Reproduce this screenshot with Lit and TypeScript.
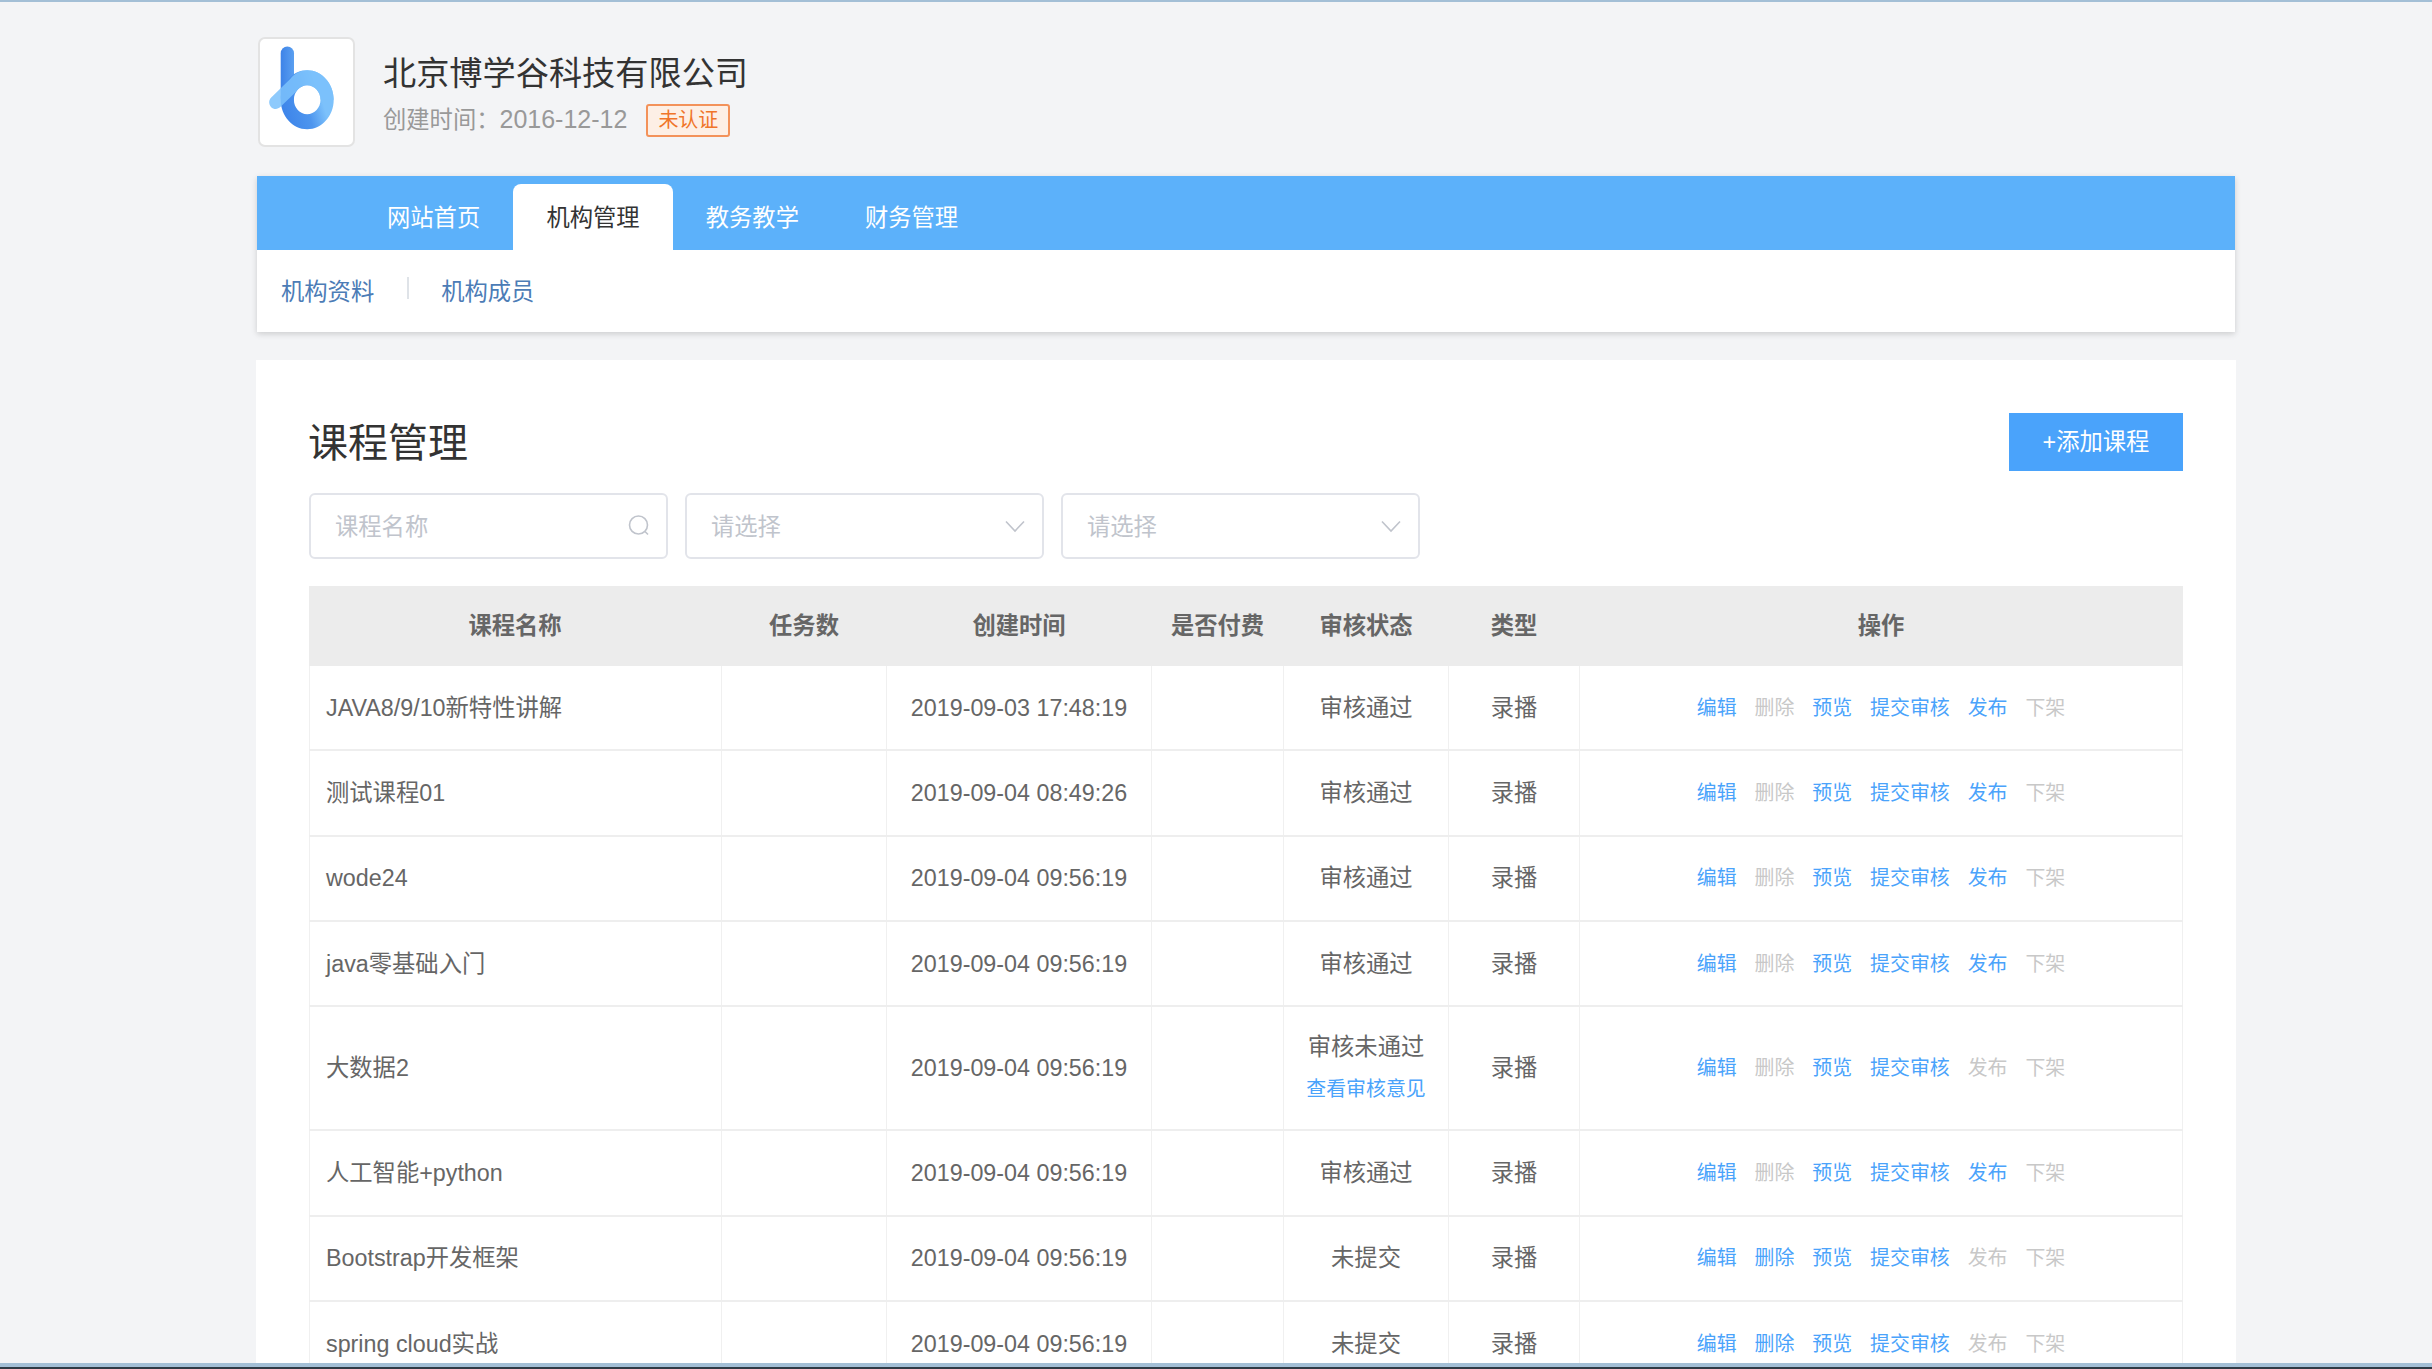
import { LitElement, html, css, nothing } from "lit";
import { customElement } from "lit/decorators.js";

type Row = {
  name: string;
  time: string;
  status: string;
  review?: boolean;
  del?: boolean;
  pub: boolean;
};

const ROWS: Row[] = [
  { name: "JAVA8/9/10新特性讲解", time: "2019-09-03 17:48:19", status: "审核通过", pub: true },
  { name: "测试课程01", time: "2019-09-04 08:49:26", status: "审核通过", pub: true },
  { name: "wode24", time: "2019-09-04 09:56:19", status: "审核通过", pub: true },
  { name: "java零基础入门", time: "2019-09-04 09:56:19", status: "审核通过", pub: true },
  { name: "大数据2", time: "2019-09-04 09:56:19", status: "审核未通过", review: true, pub: false },
  { name: "人工智能+python", time: "2019-09-04 09:56:19", status: "审核通过", pub: true },
  { name: "Bootstrap开发框架", time: "2019-09-04 09:56:19", status: "未提交", del: true, pub: false },
  { name: "spring cloud实战", time: "2019-09-04 09:56:19", status: "未提交", del: true, pub: false },
];

@customElement("app-root")
export class AppRoot extends LitElement {
  static styles = css`
    :host {
      display: block;
      position: relative;
      height: 1369px;
      overflow: hidden;
      background: #f3f4f6;
      font-family: "Liberation Sans", "Noto Sans CJK SC", sans-serif;
      font-size: 23.3px;
      color: #666;
    }
    .topline { height: 2px; background: #a3bfd6; }
    .wrap { width: 1980px; margin-left: 256px; }
    .head { display: flex; gap: 28px; padding: 35px 0 0 2px; height: 174px; box-sizing: border-box; }
    .logo {
      width: 97px; height: 110px; box-sizing: border-box; background: #fff;
      border: 2px solid #e3e3e3; border-radius: 7px; overflow: hidden; flex: none;
    }
    .logo svg { display: block; width: 97px; height: 110px; margin: -2px; }
    .info { padding-top: 11.5px; }
    .title { font-size: 33.2px; line-height: 50px; color: #333; }
    .sub { display: flex; align-items: center; gap: 19px; line-height: 44px; color: #999; }
    .created { margin-top: -2px; }
    .date { font-size: 25px; }
    .badge {
      font-size: 20px; line-height: 29px; padding: 0 10px; color: #f0752a; background: #fdefe5;
      border: 2px solid #f3925a; border-radius: 3px;
    }
    .nav { margin: 0 1px; background: #fff; box-shadow: 0 2px 6px rgba(0, 0, 0, 0.16); }
    .tabs {
      display: flex; align-items: flex-end; height: 74px; padding-left: 97px; background: #5cb1fa;
    }
    .tab {
      height: 66px; line-height: 68px; padding: 0 33px; color: #fff; border-radius: 8px 8px 0 0;
    }
    .tab.on { background: #fff; color: #333; padding: 0 33.2px; }
    .subnav {
      display: flex; align-items: center; height: 82px; padding: 0 0 2px 24px; box-sizing: border-box;
      color: #4c7cb6;
    }
    .sep { width: 2px; height: 22px; margin: -4px 32.500px 0; background: #dfe3e8; }
    .card { margin-top: 28px; height: 1100px; padding: 53px 53px 0; background: #fff; }
    .bar { display: flex; justify-content: space-between; align-items: center; }
    h1 { margin: -5px 0 0 -1px; font-size: 40px; font-weight: 400; color: #333; }
    .add {
      width: 174px; height: 58px; line-height: 58px; text-align: center; color: #fff; background: #4aa3fb;
    }
    .filters { display: flex; gap: 17px; margin-top: 22px; }
    .field {
      display: flex; align-items: center; justify-content: space-between; box-sizing: border-box;
      width: 359px; height: 66px; padding: 0 15px 0 24px; color: #c0c4cc; background: #fff;
      border: 2px solid #e2e4ea; border-radius: 6px;
    }
    .field span { margin-top: -2px; }
    .field svg { display: block; flex: none; fill: none; stroke: #c0c4cc; stroke-width: 1.6; }
    .table { margin-top: 27px; width: 1874px; line-height: 34px; }
    .row {
      display: grid; grid-template-columns: 413px 165px 265px 132px 165px 131px 603px;
      height: 85.33px; box-sizing: border-box; border-bottom: 2px solid #eeeeee;
    }
    .row.tall { height: 124px; }
    .row.th { height: 80px; border-bottom: 0; background: #ececec; font-weight: 700; }
    .cell {
      display: flex; flex-direction: column; align-items: center; justify-content: center;
      border-right: 1px solid #f0f0f0; min-width: 0; box-sizing: border-box;
    }
    .row:not(.th) .cell:first-child { border-left: 1px solid #f0f0f0; }
    .th .cell { border: 0; padding-right: 1px; }
    .cell.name { align-items: flex-start; padding-left: 16px; }
    .status { line-height: 42px; }
    .review { font-size: 19.9px; line-height: 42px; color: #4aa3fb; }
    .acts { display: flex; flex-direction: row; gap: 18px; font-size: 19.9px; color: #4aa3fb; }
    .off { color: #c8c8c8; }
    .bottom { position: absolute; left: 0; right: 0; bottom: 0; height: 6px; background: #a3bfd6; }
    .bottom::after {
      content: ""; position: absolute; left: 0; right: 0; bottom: 0; height: 2px; background: #2f3a45;
    }
  `;

  private logo() {
    return html`<svg viewBox="8.3 6.7 97 110" aria-hidden="true">
      <defs>
        <linearGradient id="stem" x1="0" y1="0" x2="1" y2="0">
          <stop offset="0" stop-color="#3d83e8" />
          <stop offset="1" stop-color="#5a9ff0" />
        </linearGradient>
        <linearGradient id="ring" x1="0.1" y1="0.75" x2="0.95" y2="0.45">
          <stop offset="0" stop-color="#3f86ea" />
          <stop offset="0.45" stop-color="#4d95ee" />
          <stop offset="0.8" stop-color="#7cc1fb" />
        </linearGradient>
      </defs>
      <rect x="31" y="16.3" width="13.3" height="58" rx="6.6" fill="url(#stem)" />
      <path
        fill="url(#ring)"
        fill-rule="evenodd"
        d="M57.5 40c14.6 0 26.5 13.2 26.5 29.5S72.100 99 57.500 99 31 85.800 31 69.500 42.900 40 57.500 40zm0 15c-7.300 0-13.300 6.500-13.300 14.500S50.200 84 57.500 84s13.300-6.500 13.300-14.500S64.800 55 57.500 55z"
      />
      <path
        fill="#7cc1fb"
        d="M57.500 40c14.600 0 26.500 13.200 26.500 29.500h-13.200c0-8-6-14.500-13.300-14.500-4.500 0-8.500 2.500-10.900 6.300l-16 15.500c-2.600 2.500-6.800 2.400-9.300-.2-2.500-2.600-2.400-6.800.2-9.300l19-18.600C45 43 50.900 40 57.500 40z"
        opacity="0.86"
      />
    </svg>`;
  }

  render() {
    return html`
      <div class="topline"></div>
      <div class="wrap">
        <header class="head">
          <div class="logo">${this.logo()}</div>
          <div class="info">
            <div class="title">北京博学谷科技有限公司</div>
            <div class="sub"><span class="created">创建时间：<span class="date">2016-12-12</span></span><span class="badge">未认证</span></div>
          </div>
        </header>
        <nav class="nav">
          <div class="tabs">
            <div class="tab">网站首页</div>
            <div class="tab on">机构管理</div>
            <div class="tab">教务教学</div>
            <div class="tab">财务管理</div>
          </div>
          <div class="subnav"><span>机构资料</span><i class="sep"></i><span>机构成员</span></div>
        </nav>
        <main class="card">
          <div class="bar"><h1>课程管理</h1><div class="add">+添加课程</div></div>
          <div class="filters">
            <div class="field">
              <span>课程名称</span>
              <svg width="24" height="24" viewBox="0 0 24 24">
                <circle cx="11.500" cy="11" r="9" />
                <path d="M18 17.500l3 3" />
              </svg>
            </div>
            <div class="field">
              <span>请选择</span>
              <svg width="24" height="14" viewBox="0 0 24 14"><path d="M3 2.500l9 9.500 9-9.500" /></svg>
            </div>
            <div class="field">
              <span>请选择</span>
              <svg width="24" height="14" viewBox="0 0 24 14"><path d="M3 2.500l9 9.500 9-9.500" /></svg>
            </div>
          </div>
          <div class="table">
            <div class="row th">
              ${["课程名称", "任务数", "创建时间", "是否付费", "审核状态", "类型", "操作"].map(
                (t) => html`<div class="cell">${t}</div>`
              )}
            </div>
            ${ROWS.map(
              (r) => html`<div class="row ${r.review ? "tall" : ""}">
                <div class="cell name">${r.name}</div>
                <div class="cell"></div>
                <div class="cell">${r.time}</div>
                <div class="cell"></div>
                <div class="cell">
                  <span class="status">${r.status}</span>
                  ${r.review ? html`<span class="review">查看审核意见</span>` : nothing}
                </div>
                <div class="cell">录播</div>
                <div class="cell acts">
                  <span>编辑</span>
                  <span class=${r.del ? "" : "off"}>删除</span>
                  <span>预览</span>
                  <span>提交审核</span>
                  <span class=${r.pub ? "" : "off"}>发布</span>
                  <span class="off">下架</span>
                </div>
              </div>`
            )}
          </div>
        </main>
      </div>
      <div class="bottom"></div>
    `;
  }
}
